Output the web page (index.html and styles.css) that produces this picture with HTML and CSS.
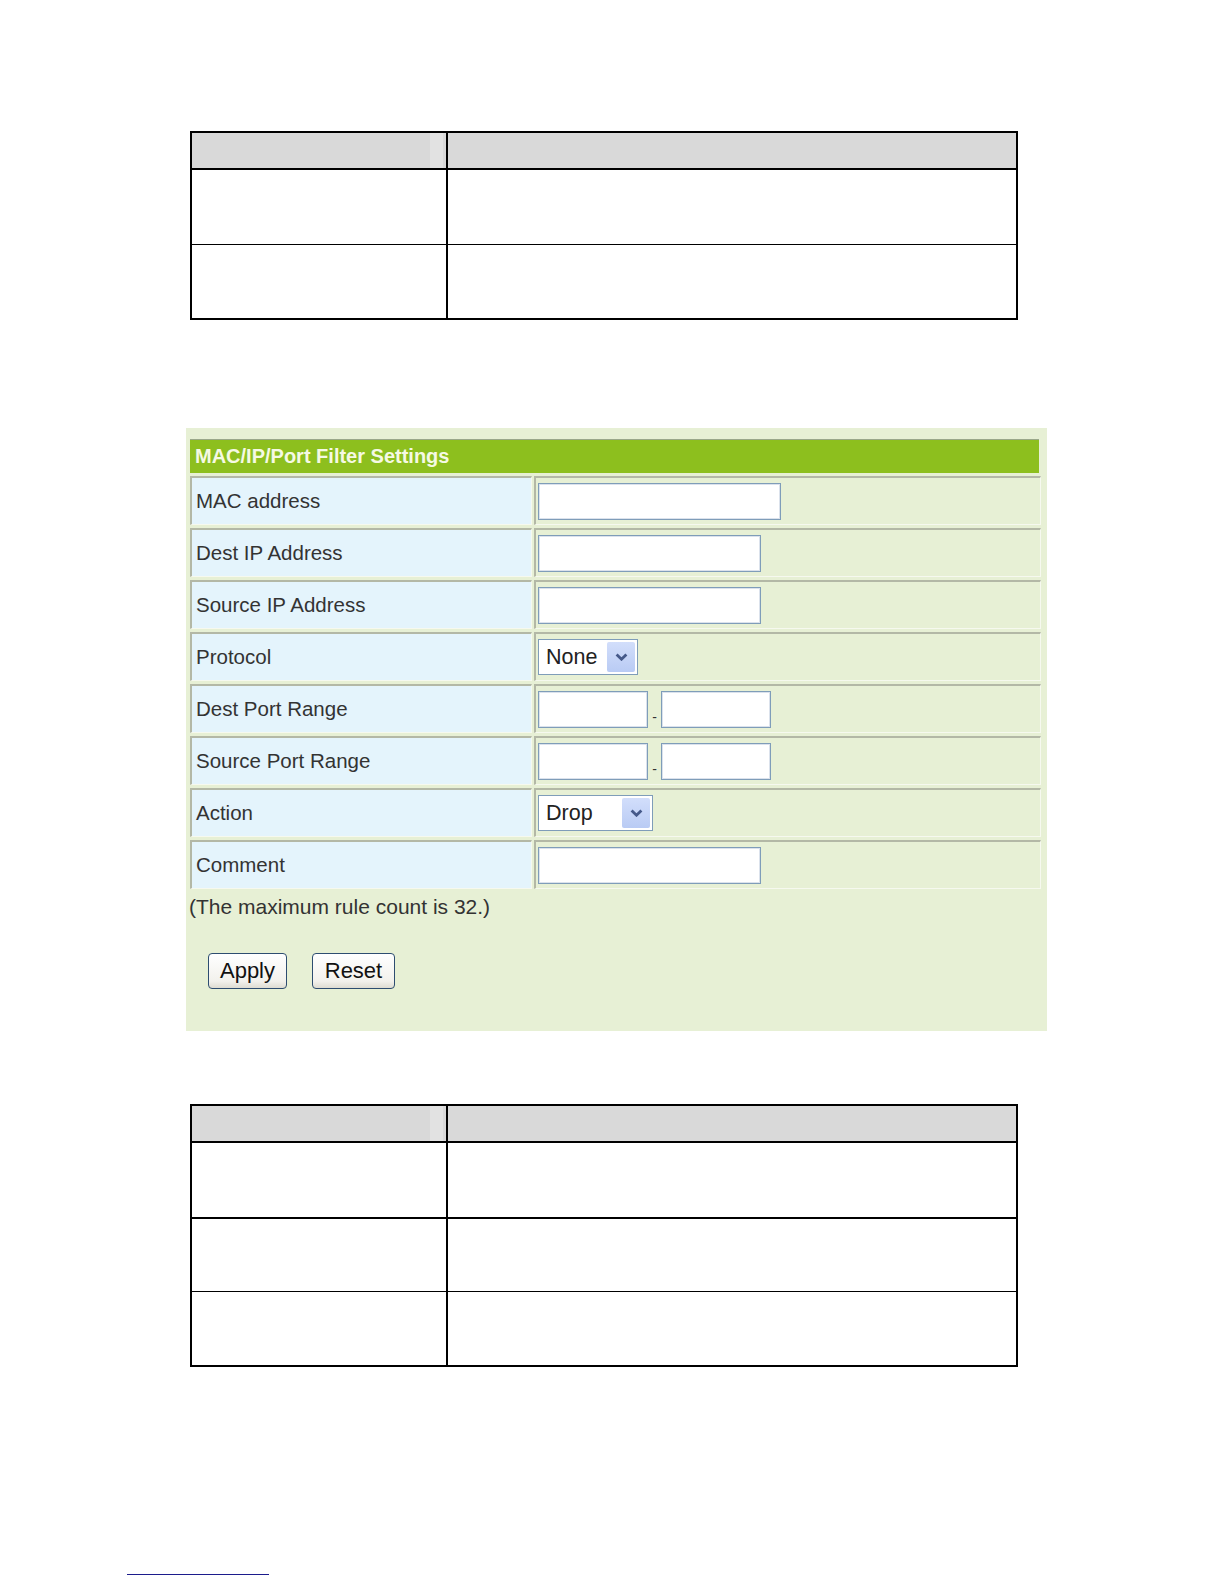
FILE: index.html
```html
<!DOCTYPE html>
<html>
    <head>
        <meta charset = "utf-8">
        <title>MAC/IP/Port Filter Settings</title>
        <link rel="stylesheet" href="styles.css">
    </head>
    <body>
        <div id = "page">
            <table class = "spec">
                <tr><th></th><th></th></tr>
                <tr><td></td><td></td></tr>
                <tr><td></td><td></td></tr>
            </table>

            <div id = "panel">
                <div id = "filter">
                    <div class = "title">MAC/IP/Port Filter Settings</div>

                    <div class = "label">MAC address</div>
                    <div class = "value"><input type = "text" class = "mac"></div>

                    <div class = "label">Dest IP Address</div>
                    <div class = "value"><input type = "text" class = "ip"></div>

                    <div class = "label">Source IP Address</div>
                    <div class = "value"><input type = "text" class = "ip"></div>

                    <div class = "label">Protocol</div>
                    <div class = "value">
                        <div class = "combo proto">
                            <span>None</span>
                            <span class = "arrow"><svg width = "13" height = "8" viewBox = "0 0 13 8"><path d = "M1.6 1.4 L6.5 6.2 L11.4 1.4" fill = "none" stroke = "#45598a" stroke-width = "2.8"/></svg></span>
                        </div>
                    </div>

                    <div class = "label">Dest Port Range</div>
                    <div class = "value">
                        <input type = "text" class = "port"><span class = "dash">-</span><input type = "text" class = "port">
                    </div>

                    <div class = "label">Source Port Range</div>
                    <div class = "value">
                        <input type = "text" class = "port"><span class = "dash">-</span><input type = "text" class = "port">
                    </div>

                    <div class = "label">Action</div>
                    <div class = "value">
                        <div class = "combo act">
                            <span>Drop</span>
                            <span class = "arrow"><svg width = "13" height = "8" viewBox = "0 0 13 8"><path d = "M1.6 1.4 L6.5 6.2 L11.4 1.4" fill = "none" stroke = "#45598a" stroke-width = "2.8"/></svg></span>
                        </div>
                    </div>

                    <div class = "label">Comment</div>
                    <div class = "value"><input type = "text" class = "ip"></div>
                </div>

                <p class = "note">(The maximum rule count is 32.)</p>

                <div class = "buttons">
                    <button class = "apply">Apply</button>
                    <button class = "reset">Reset</button>
                </div>
            </div>

            <table class = "spec lower">
                <tr><th></th><th></th></tr>
                <tr><td></td><td></td></tr>
                <tr class = "thick"><td></td><td></td></tr>
                <tr><td></td><td></td></tr>
            </table>

            <div class = "footline"></div>
        </div>
    </body>
</html>
```

FILE: styles.css
```css
*{
    margin:            0;
    padding:           0;
}
body{
    background:        #fff;
    font-family:       "Liberation Sans", Arial, sans-serif;
}
#page{
    padding-top:       131px;
}

/* empty description tables */
.spec{
    width:             828px;
    margin-left:       190px;
    border-collapse:   separate;
    border-spacing:    0;
    border:            2px solid #000;
}
.spec th,
.spec td{
    box-sizing:        border-box;
    padding:           0;
}
.spec th{
    height:            37px;
    background:        #d9d9d9;
    border-bottom:     2px solid #000;
}
.spec th:first-child{
    background:        linear-gradient(to right, #d9d9d9 238px, #e2e2e2 238px, #e2e2e2 251px, #d9d9d9 251px);
}
.spec th:first-child,
.spec td:first-child{
    width:             256px;
    border-right:      2px solid #000;
}
.spec td{
    height:            74px;
}
.spec tr + tr + tr td{
    border-top:        1px solid #000;
}
.spec tr.thick td{
    border-top-width:  2px;
}

/* filter settings panel */
#panel{
    box-sizing:        border-box;
    width:             861px;
    margin:            108px 0 0 186px;
    padding:           11px 4px 42px 4px;
    background:        #e7f0d5;
}
#filter{
    display:           grid;
    grid-template-columns: 342px 507px;
    grid-template-rows: 34px;
    grid-auto-rows:    49px;
    column-gap:        2px;
    row-gap:           3px;
}
.title{
    grid-column:       1 / 3;
    display:           flex;
    align-items:       center;
    margin-right:      2px;
    padding-left:      5px;
    background:        #8dbf1e;
    border-top:        1px solid #9aa78a;
    color:             #f5f9e4;
    font-size:         20px;
    font-weight:       bold;
}
.label,
.value{
    display:           flex;
    align-items:       center;
    border-top:        2px solid #b3b8a6;
    border-left:       2px solid #b3b8a6;
    border-bottom:     1px solid #f6f9ef;
    border-right:      1px solid #f6f9ef;
}
.label{
    padding-left:      4px;
    background:        #e4f4fc;
    color:             #333;
    font-size:         20.5px;
}
.value{
    padding-left:      2px;
}
.value input{
    box-sizing:        border-box;
    height:            37px;
    border:            1px solid #7f9db9;
    box-shadow:        inset 0 0 0 1px #dbe2ec;
    background:        #fff;
}
.value input.mac{
    width:             243px;
}
.value input.ip{
    width:             223px;
}
.value input.port{
    width:             110px;
}
.dash{
    width:             13px;
    margin-top:        16px;
    text-align:        center;
    font-size:         14px;
    line-height:       1;
    color:             #333;
}
.combo{
    box-sizing:        border-box;
    display:           flex;
    align-items:       center;
    height:            36px;
    padding:           0 2px 0 7px;
    border:            1px solid #7f9db9;
    background:        #fff;
    color:             #222;
    font-size:         21.5px;
}
.combo.proto{
    width:             100px;
}
.combo.act{
    width:             115px;
}
.combo .arrow{
    display:           flex;
    align-items:       center;
    justify-content:   center;
    width:             28px;
    height:            30px;
    margin-left:       auto;
    border-radius:     2px;
    background:        linear-gradient(#d2defb, #b9cbf4);
}
.note{
    margin:            6px 0 0 -1px;
    line-height:       23px;
    color:             #333;
    font-size:         21px;
}
.buttons{
    display:           flex;
    gap:               25px;
    margin:            35px 0 0 18px;
}
.buttons button{
    height:            36px;
    border:            1px solid #2d4d70;
    border-radius:     4px;
    background:        linear-gradient(#ffffff, #f2f1ec 80%, #dedcd2);
    color:             #111;
    font-family:       "Liberation Sans", Arial, sans-serif;
    font-size:         22px;
}
.buttons .apply{
    width:             79px;
}
.buttons .reset{
    width:             83px;
}
.lower{
    margin-top:        73px;
}
.footline{
    width:             142px;
    margin:            207px 0 0 127px;
    border-top:        1px solid #1c1c8c;
}
```
